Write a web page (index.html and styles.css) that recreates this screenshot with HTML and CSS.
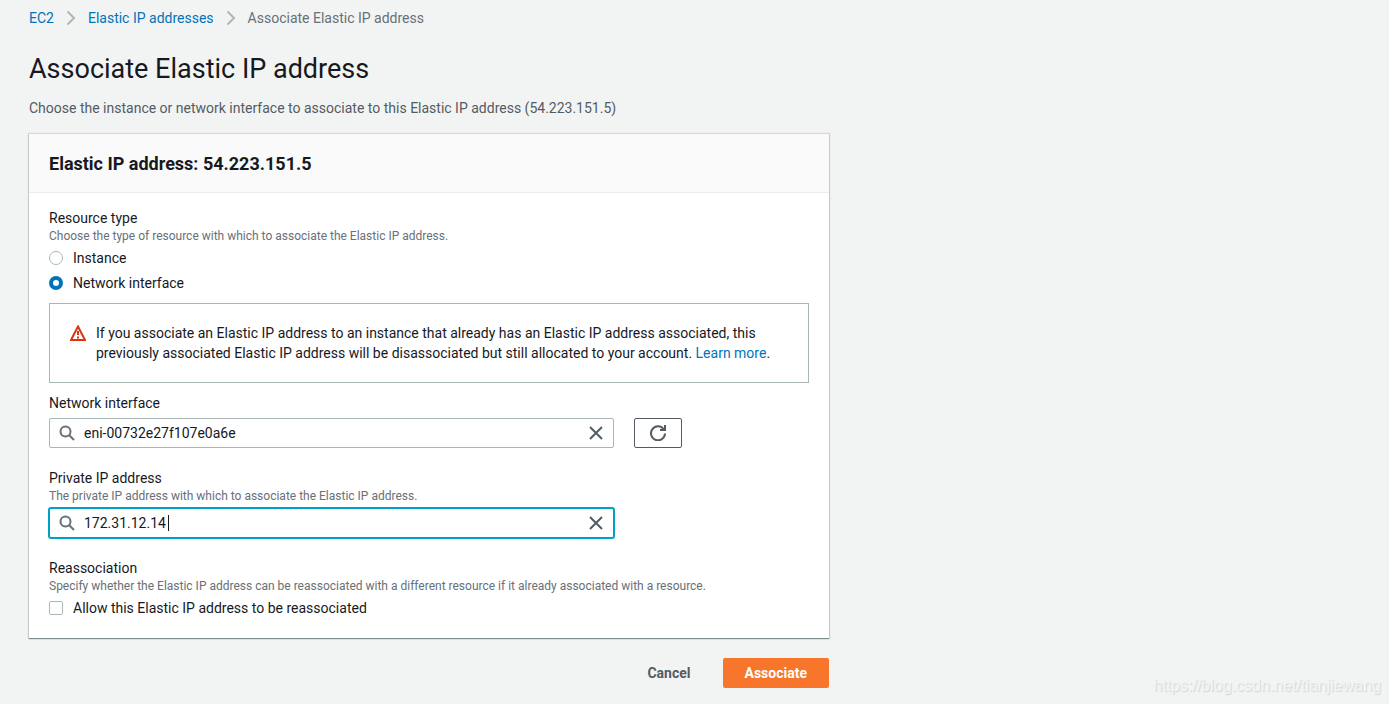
FILE: index.html
```html
<!DOCTYPE html>
<html lang="en">
<head>
<meta charset="utf-8">
<title>Associate Elastic IP address</title>
<link rel="stylesheet" href="styles.css">
</head>
<body>
<main class="page">
  <nav class="breadcrumbs" aria-label="Breadcrumbs">
    <a href="#">EC2</a>
    <svg class="chevron" viewBox="0 0 10 16" aria-hidden="true"><path d="M1.500 1.500 8 8l-6.500 6.500"/></svg>
    <a href="#">Elastic IP addresses</a>
    <svg class="chevron" viewBox="0 0 10 16" aria-hidden="true"><path d="M1.500 1.500 8 8l-6.500 6.500"/></svg>
    <span class="current">Associate Elastic IP address</span>
  </nav>
  <h1 class="title">Associate Elastic IP address</h1>
  <p class="description">Choose the instance or network interface to associate to this Elastic IP address (54.223.151.5)</p>

  <form>
    <section class="card">
      <h2 class="card-header">Elastic IP address: 54.223.151.5</h2>
      <div class="card-body">
        <div class="field" role="radiogroup" aria-labelledby="type-label">
          <div class="label" id="type-label">Resource type</div>
          <div class="hint">Choose the type of resource with which to associate the Elastic IP address.</div>
          <div class="options">
            <label class="option"><input class="radio" type="radio" name="type">Instance</label>
            <label class="option"><input class="radio" type="radio" name="type" checked>Network interface</label>
          </div>
        </div>

        <div class="alert">
          <svg class="alert-icon" viewBox="0 0 16 16" aria-hidden="true"><path d="M8 1.500 15 15H1Z"/><path d="M8 6v4M8 11.500v2"/></svg>
          <p class="alert-text">If you associate an Elastic IP address to an instance that already has an Elastic IP address associated, this previously associated Elastic IP address will be disassociated but still allocated to your account. <a href="#">Learn more</a>.</p>
        </div>

        <div class="field">
          <label class="label" for="eni">Network interface</label>
          <div class="grid">
            <div class="search">
              <svg class="search-icon" viewBox="0 0 16 16" aria-hidden="true"><circle cx="6.500" cy="6.500" r="5"/><path d="m10 10 5 5"/></svg>
              <input class="search-input" id="eni" type="text" value="eni-00732e27f107e0a6e">
              <button class="clear" type="button" aria-label="Clear network interface"><svg class="icon" viewBox="0 0 16 16"><path d="m2 2 12 12M14 2 2 14"/></svg></button>
            </div>
            <button class="refresh" type="button" aria-label="Refresh"><svg class="icon" viewBox="0 0 16 16"><path d="M15 8.500A7 7 0 1 1 13.500 4L15 5M15 0v5h-5"/></svg></button>
          </div>
        </div>

        <div class="field">
          <label class="label" for="ip">Private IP address</label>
          <div class="hint">The private IP address with which to associate the Elastic IP address.</div>
          <div class="grid grid-tight">
            <div class="search search-active">
              <svg class="search-icon" viewBox="0 0 16 16" aria-hidden="true"><circle cx="6.500" cy="6.500" r="5"/><path d="m10 10 5 5"/></svg>
              <div class="input-wrap">
                <input class="search-input" id="ip" type="text" value="172.31.12.14" autofocus>
                <span class="caret" aria-hidden="true"></span>
              </div>
              <button class="clear" type="button" aria-label="Clear private IP address"><svg class="icon" viewBox="0 0 16 16"><path d="m2 2 12 12M14 2 2 14"/></svg></button>
            </div>
          </div>
        </div>

        <div class="field">
          <div class="label">Reassociation</div>
          <div class="hint">Specify whether the Elastic IP address can be reassociated with a different resource if it already associated with a resource.</div>
          <div class="options">
            <label class="option"><input class="checkbox" type="checkbox">Allow this Elastic IP address to be reassociated</label>
          </div>
        </div>
      </div>
    </section>
    <div class="actions">
      <button class="button" type="button">Cancel</button>
      <button class="button button-primary" type="submit">Associate</button>
    </div>
  </form>
</main>
<div class="watermark">https://blog.csdn.net/tianjiewang</div>
</body>
</html>
```
FILE: styles.css
```css
* { box-sizing: border-box; }
body {
  margin: 0;
  background: #f2f4f3;
  color: #16191f;
  font: 14px/20px Roboto, "Open Sans", sans-serif;
}
a { color: #0073bb; text-decoration: none; }
button, input { font: inherit; color: inherit; margin: 0; }
svg { fill: none; stroke: currentColor; stroke-width: 2; flex: none; }

.page { max-width: 858px; padding: 8px 29px 16px; }
.breadcrumbs { display: flex; align-items: center; color: #687078; }
.chevron { width: 10px; height: 16px; margin: 0 12px; color: #aab7b8; }
.title { margin: 23px 0 11px; font-size: 27px; line-height: 36px; font-weight: 400; }
.description { margin: 0 0 16px; color: #545b64; }

.card {
  background: #fff;
  box-shadow: 0 1px 1px 0 rgba(0, 28, 36, 0.4), 0 0 1px 1px rgba(0, 28, 36, 0.12);
}
.card-header {
  margin: 0;
  padding: 19px 20px 17px;
  background: #fafafa;
  border-bottom: 1px solid #eaeded;
  font-size: 18px;
  line-height: 22px;
  font-weight: 700;
}
.card-body { padding: 15px 20px 20px; display: flex; flex-direction: column; }
.label { display: block; }
.hint { font-size: 12px; line-height: 16px; color: #687078; }
.options { display: flex; flex-direction: column; gap: 5px; margin-top: 4px; }
.option { display: flex; align-items: center; gap: 10px; }
.radio, .checkbox {
  appearance: none;
  width: 14px;
  height: 14px;
  background: #fff;
  border: 1px solid #aab7b8;
}
.radio { border-radius: 50%; }
.radio:checked { border: 4px solid #0073bb; }
.checkbox { border-radius: 2px; }

.alert {
  display: flex;
  gap: 10px;
  margin: 10px 0;
  padding: 19px 20px;
  border: 1px solid #aab7b8;
}
.alert-icon { width: 16px; height: 16px; margin-top: 2px; color: #df3312; }
.alert-text { margin: 0; }

.grid { display: grid; grid-template-columns: repeat(4, 1fr); gap: 20px; margin: 5px 0 20px; }
.grid-tight { margin-top: 4px; }
.search {
  grid-column: span 3;
  display: flex;
  align-items: center;
  height: 30px;
  padding: 0 9px;
  background: #fff;
  border: 1px solid #aab7b8;
  border-radius: 2px;
}
.search-active { border-color: #00a1c9; box-shadow: 0 0 0 1px #00a1c9; }
.search-icon { width: 16px; height: 16px; color: #687078; }
.input-wrap { position: relative; display: flex; flex: 1; min-width: 0; }
.search-input {
  flex: 1;
  min-width: 0;
  padding: 0 0 0 9px;
  border: 0;
  outline: 0;
  background: none;
  caret-color: transparent;
}
.caret {
  position: absolute;
  left: 93px;
  top: 2px;
  width: 1px;
  height: 16px;
  background: #16191f;
}
.clear { display: flex; padding: 0; border: 0; background: none; color: #545b64; }
.icon { width: 16px; height: 16px; }
.refresh {
  display: flex;
  align-items: center;
  justify-content: center;
  width: 48px;
  height: 30px;
  padding: 0;
  background: #fff;
  color: #545b64;
  border: 1px solid #545b64;
  border-radius: 2px;
}

.actions { display: flex; justify-content: flex-end; gap: 10px; margin-top: 20px; }
.button {
  height: 30px;
  padding: 0 22px;
  border: 0;
  border-radius: 2px;
  background: none;
  color: #545b64;
  font-weight: 700;
}
.button-primary { background: #f8752c; color: #fff; }
.watermark {
  position: absolute;
  right: 8px;
  bottom: 8px;
  color: #f2f4f3;
  font: 16px/20px "Liberation Sans", Arial, sans-serif;
  text-shadow: 1px 1px 1px #d0d2d1;
}
```
